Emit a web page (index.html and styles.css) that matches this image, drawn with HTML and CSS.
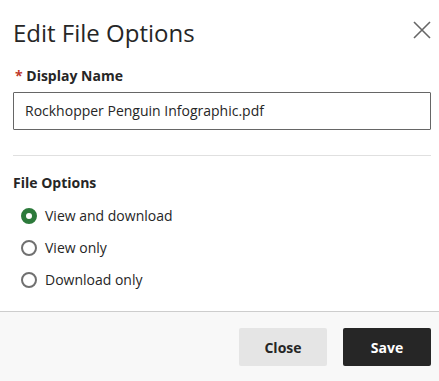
FILE: index.html
```html
<!DOCTYPE html>
<html lang="en">
<head>
<meta charset="utf-8">
<title>Edit File Options</title>
<link rel="stylesheet" href="styles.css">
</head>
<body>
<div class="dialog">
  <div class="body">
    <div class="header">
      <h1 class="title">Edit File Options</h1>
      <button class="close-x" aria-label="Close">
        <svg width="18" height="18" viewBox="0 0 18 18"><path d="M1 1L17 17M17 1L1 17" stroke="#666" stroke-width="1.6" fill="none"/></svg>
      </button>
    </div>
    <label class="field-label"><span class="req">*</span> Display Name</label>
    <div class="input">Rockhopper Penguin Infographic.pdf</div>
    <div class="divider"></div>
    <div class="group-label">File Options</div>
    <div class="radios">
      <div class="radio-row"><span class="radio checked"></span><span class="radio-text">View and download</span></div>
      <div class="radio-row"><span class="radio"></span><span class="radio-text">View only</span></div>
      <div class="radio-row"><span class="radio"></span><span class="radio-text">Download only</span></div>
    </div>
  </div>
  <div class="footer">
    <button class="btn btn-close">Close</button>
    <button class="btn btn-save">Save</button>
  </div>
</div>
</body>
</html>
```

FILE: styles.css
```css
* { box-sizing: border-box; }
html, body { margin: 0; padding: 0; background: #fff; }
body { font-family: "Open Sans", "Noto Sans", sans-serif; color: #262626; width: 439px; height: 381px; overflow: hidden; }
.dialog { display: flex; flex-direction: column; height: 381px; }
.body { padding: 0 8px 0 13px; flex: 1; }
.header { display: flex; justify-content: space-between; align-items: flex-start; padding-top: 17px; }
.title { margin: 0; font-size: 24px; font-weight: 400; line-height: 32px; color: #262626; }
.close-x { border: 0; background: none; padding: 0; margin: 4px 0 0 0; width: 18px; height: 18px; display: block; }
.close-x svg { display: block; }
.field-label { display: block; margin-top: 17px; font-size: 14px; font-weight: 700; line-height: 20px; }
.req { color: #c0392b; padding-left: 2px; }
.input { margin-top: 6px; height: 38px; border: 1px solid #666; border-radius: 1px; padding: 0 11px; font-size: 14px; line-height: 36px; color: #262626; }
.divider { margin-top: 25px; height: 1px; background: #e0e0e0; }
.group-label { margin-top: 17px; font-size: 14px; font-weight: 700; line-height: 20px; }
.radios { margin-top: 7px; padding-left: 8px; display: flex; flex-direction: column; }
.radio-row { display: flex; align-items: center; height: 32px; gap: 8px; }
.radio { width: 16px; height: 16px; border-radius: 50%; border: 2px solid #707070; background: #fff; flex: none; }
.radio.checked { border: 5px solid #2c7a3b; }
.radio-text { font-size: 14px; line-height: 20px; }
.footer { height: 70px; border-top: 1px solid #cdcdcd; background: #f8f8f8; display: flex; justify-content: flex-end; align-items: flex-start; gap: 16px; padding: 16px 8px 0 0; }
.btn { width: 88px; height: 38px; border: 0; border-radius: 2px; font-family: "Open Sans", "Noto Sans", sans-serif; font-size: 14px; font-weight: 700; }
.btn-close { background: #e5e5e5; color: #262626; }
.btn-save { background: #262626; color: #fff; }
```
